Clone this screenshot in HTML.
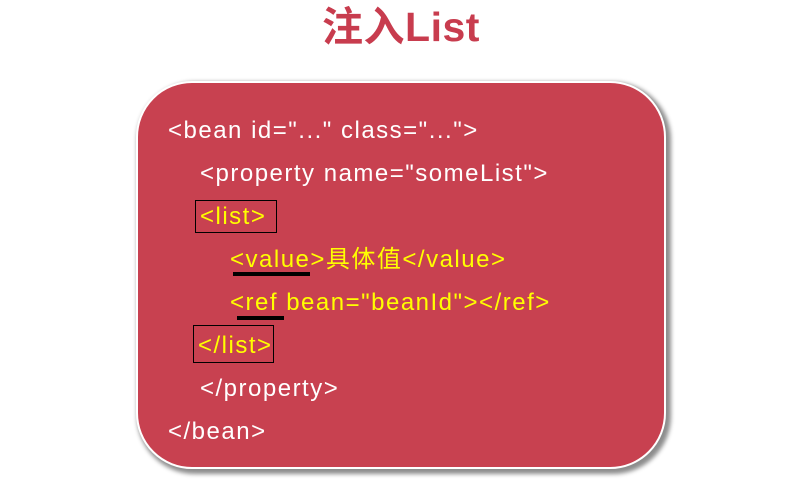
<!DOCTYPE html>
<html><head><meta charset="utf-8"><style>
html,body{margin:0;padding:0;background:#fff;}
body{width:810px;height:484px;position:relative;overflow:hidden;font-family:"Liberation Sans","Noto Sans CJK SC",sans-serif;}
.title{position:absolute;left:0;width:802px;top:2px;text-align:center;font-size:41px;font-weight:bold;color:#c83c4e;line-height:50px;letter-spacing:0.5px;}
.box{position:absolute;left:136px;top:81px;width:526px;height:384px;background:#c84150;border:2px solid #fff;border-radius:56px;box-shadow:3px 3px 4px 2px rgba(0,0,0,0.45);}
.l{position:absolute;font-size:24px;line-height:30px;color:#fff;white-space:nowrap;letter-spacing:1.5px;}
.y{color:#ffff00;}
.rect{position:absolute;border:1px solid #000;}
.ul{position:absolute;background:#000;height:4px;}
</style></head><body>
<div class="title">注入List</div>
<div class="box"></div>
<div class="l" style="left:168px;top:116px">&lt;bean id="..." class="..."&gt;</div>
<div class="l" style="left:200px;top:159px">&lt;property name="someList"&gt;</div>
<div class="rect" style="left:195px;top:200px;width:80px;height:31px"></div>
<div class="l y" style="left:200px;top:202px">&lt;list&gt;</div>
<div class="l y" style="left:230px;top:245px">&lt;value&gt;具体值&lt;/value&gt;</div>
<div class="ul" style="left:233px;top:272px;width:77px"></div>
<div class="l y" style="left:230px;top:288px">&lt;ref bean="beanId"&gt;&lt;/ref&gt;</div>
<div class="ul" style="left:237px;top:316px;width:47px"></div>
<div class="rect" style="left:193px;top:325px;width:79px;height:36px"></div>
<div class="l y" style="left:198px;top:331px">&lt;/list&gt;</div>
<div class="l" style="left:200px;top:374px">&lt;/property&gt;</div>
<div class="l" style="left:168px;top:417px">&lt;/bean&gt;</div>
</body></html>
